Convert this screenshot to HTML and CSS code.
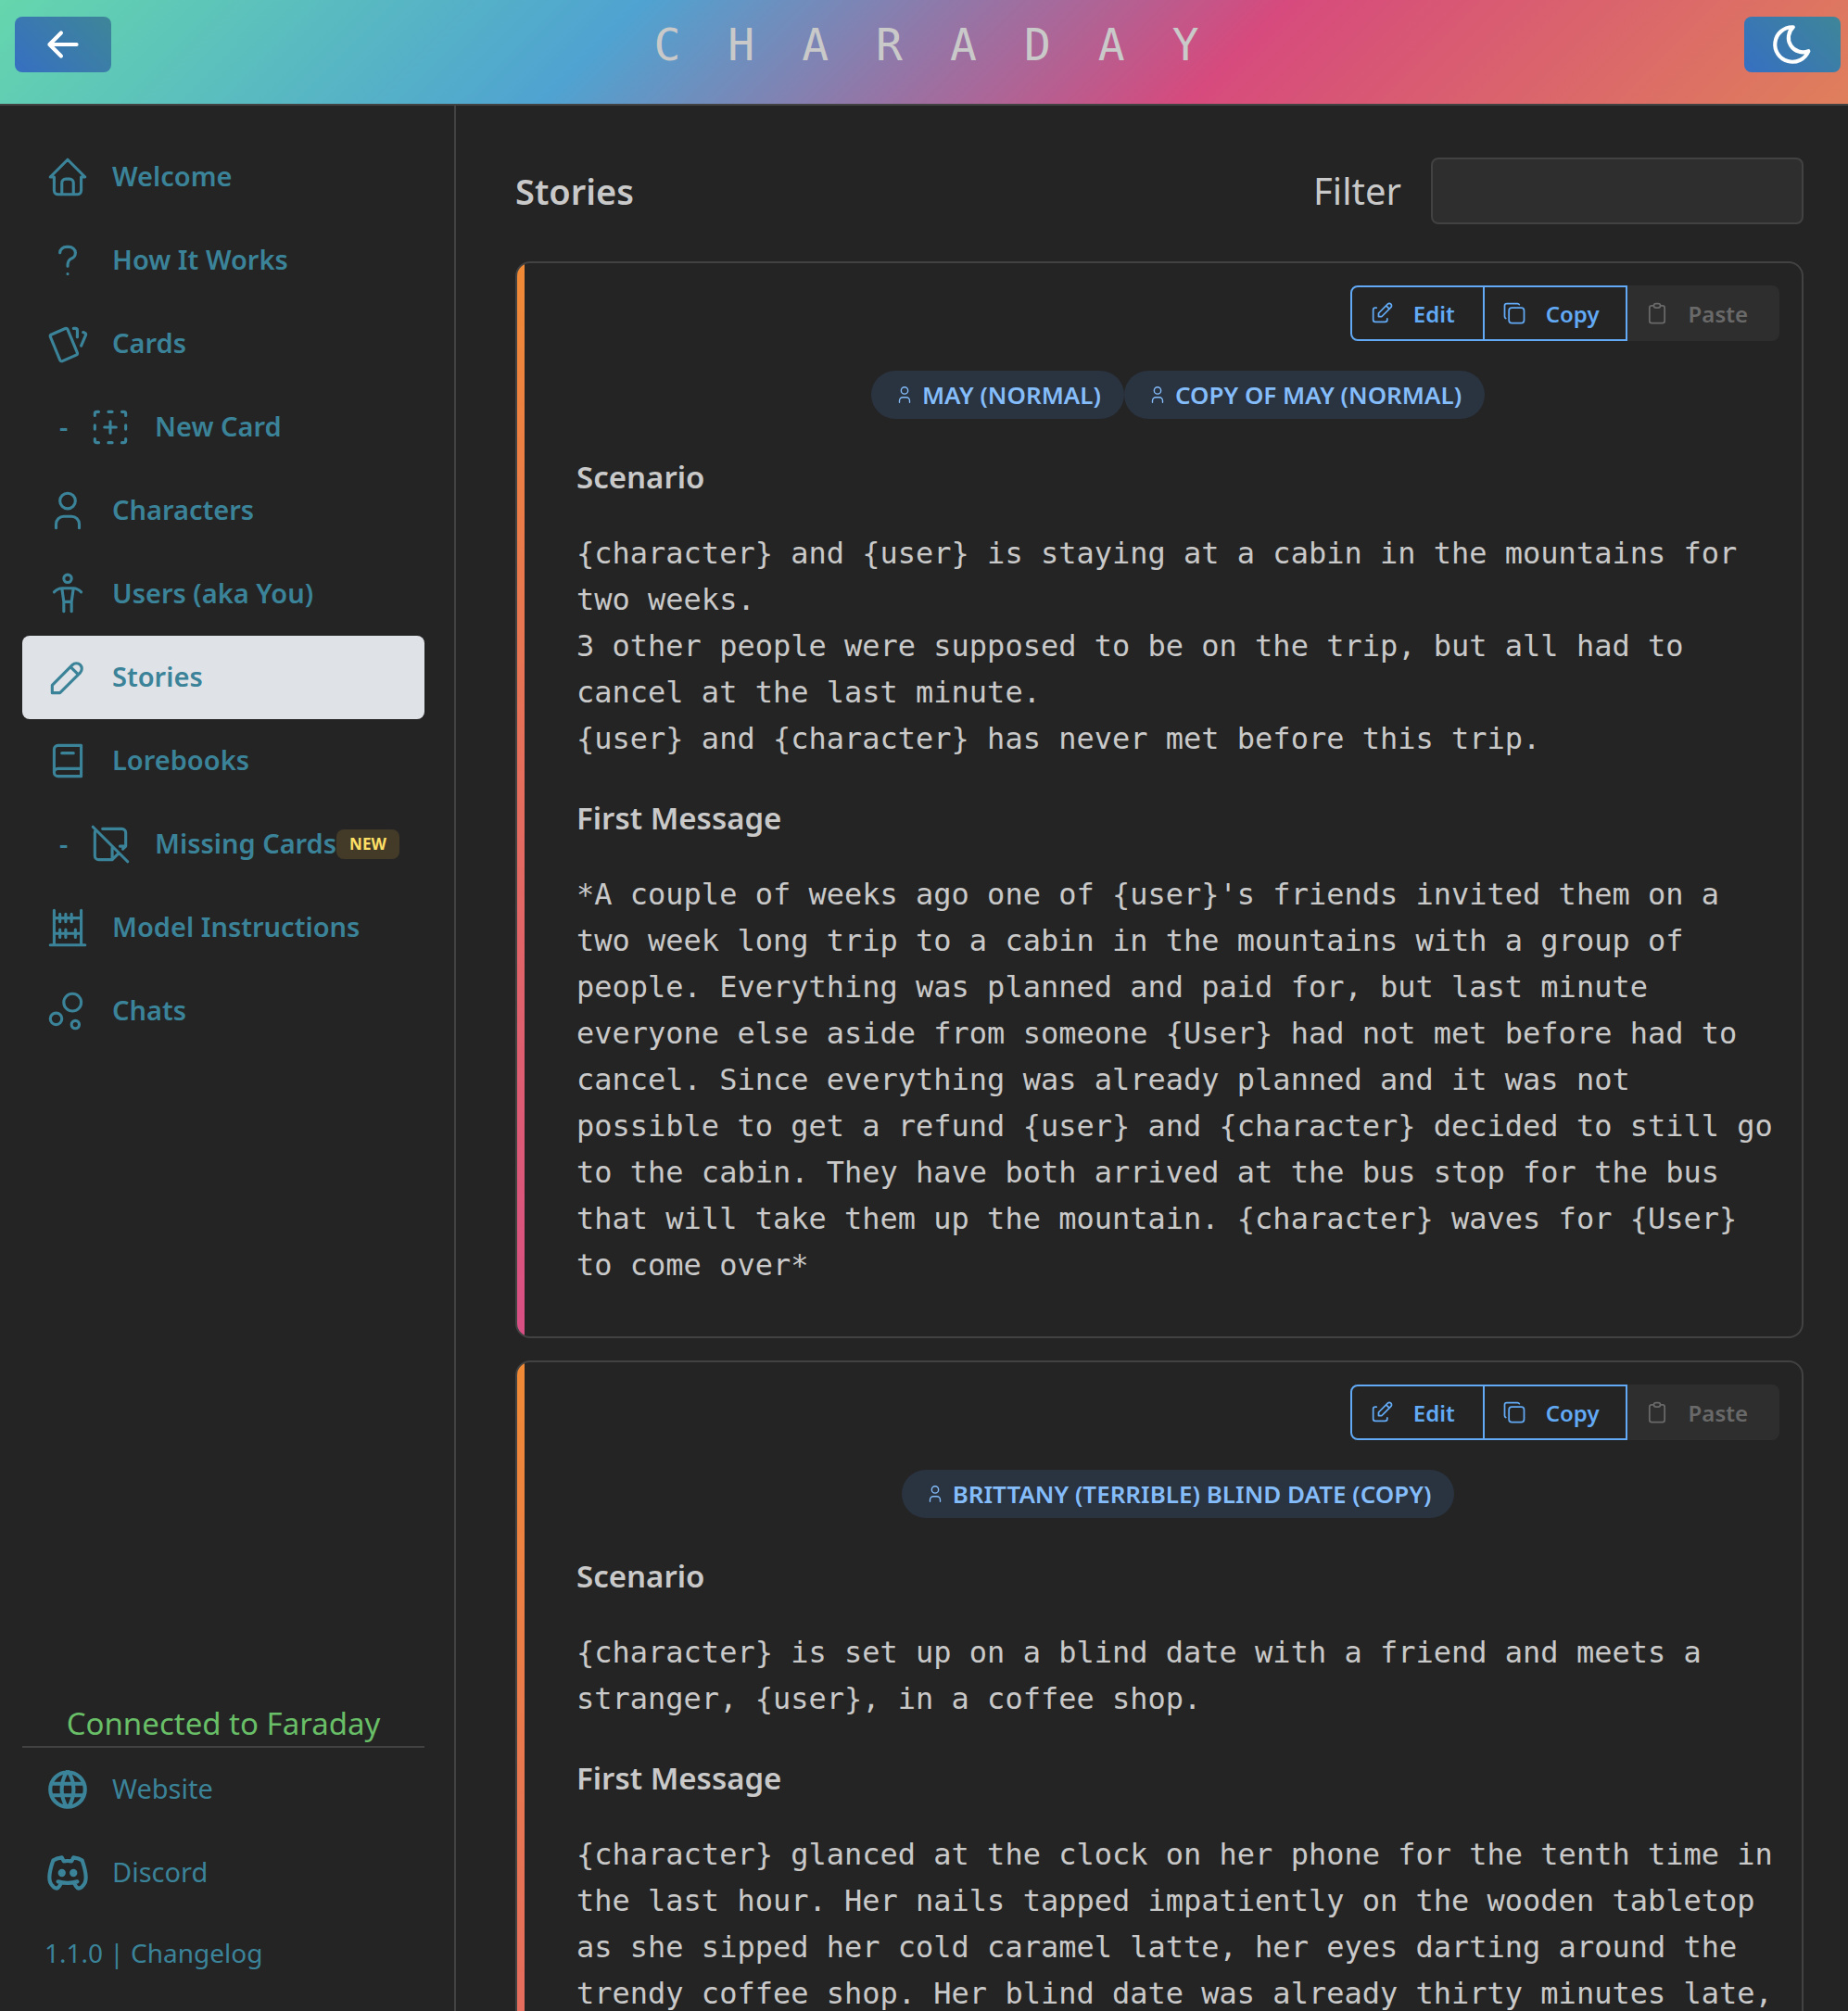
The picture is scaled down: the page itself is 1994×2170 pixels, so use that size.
FILE: index.html
```html
<!DOCTYPE html>
<html lang="en">
<head>
<meta charset="utf-8">
<meta name="viewport" content="width=device-width, initial-scale=1">
<title>Charaday</title>
<link rel="stylesheet" href="styles.css">
</head>
<body>
<svg class="sprite" aria-hidden="true">
  <symbol id="edit" viewBox="0 0 24 24"><path d="M7 7h-1a2 2 0 0 0-2 2v9a2 2 0 0 0 2 2h9a2 2 0 0 0 2-2v-1M20.385 6.585a2.1 2.1 0 0 0-2.97-2.97l-8.415 8.385v3h3l8.385-8.415zM16 5l3 3"/></symbol>
  <symbol id="copy" viewBox="0 0 24 24"><path d="M7 9.667a2.667 2.667 0 0 1 2.667-2.667h8.666a2.667 2.667 0 0 1 2.667 2.667v8.666a2.667 2.667 0 0 1-2.667 2.667h-8.666a2.667 2.667 0 0 1-2.667-2.667zM4.012 16.737a2.005 2.005 0 0 1-1.012-1.737v-10c0-1.1.9-2 2-2h10c.75 0 1.158.385 1.5 1"/></symbol>
  <symbol id="paste" viewBox="0 0 24 24"><path d="M9 5h-2a2 2 0 0 0-2 2v12a2 2 0 0 0 2 2h10a2 2 0 0 0 2-2v-12a2 2 0 0 0-2-2h-2M9 5a2 2 0 0 1 2-2h2a2 2 0 0 1 0 4h-2a2 2 0 0 1-2-2z"/></symbol>
  <symbol id="user" viewBox="0 0 24 24"><path d="M8 7a4 4 0 1 0 8 0a4 4 0 0 0-8 0M6 21v-2a4 4 0 0 1 4-4h4a4 4 0 0 1 4 4v2"/></symbol>
</svg>

<header class="topbar">
  <button class="icon-button" type="button" aria-label="Back"><svg class="icon icon-bold" viewBox="0 0 24 24"><path d="M5 12h14M5 12l6 6M5 12l6-6"/></svg></button>
  <div class="brand">CHARADAY</div>
  <button class="icon-button" type="button" aria-label="Toggle color scheme"><svg class="icon icon-bold" viewBox="0 0 24 24"><path d="M12 3c.132 0 .263 0 .393 0a7.5 7.5 0 0 0 7.92 12.446a9 9 0 1 1-8.313-12.454z"/></svg></button>
</header>

<div class="layout">
  <aside class="sidebar">
    <nav class="nav">
      <a class="nav-item" href="#welcome"><svg class="icon" viewBox="0 0 24 24"><path d="M5 12H3l9-9 9 9h-2M5 12v7a2 2 0 0 0 2 2h10a2 2 0 0 0 2-2v-7M9 21v-6a2 2 0 0 1 2-2h2a2 2 0 0 1 2 2v6"/></svg><span class="nav-label">Welcome</span></a>
      <a class="nav-item" href="#how"><svg class="icon" viewBox="0 0 24 24"><path d="M8 8a3.5 3 0 0 1 3.5-3h1a3.5 3 0 0 1 3.5 3a3 3 0 0 1-2 3a3 4 0 0 0-2 4M12 19v.01"/></svg><span class="nav-label">How It Works</span></a>
      <a class="nav-item" href="#cards"><svg class="icon" viewBox="0 0 24 24"><path d="M3.604 7.197l7.138-3.109a.96.96 0 0 1 1.27.527l4.924 11.902a1 1 0 0 1-.514 1.304l-7.137 3.109a.96.96 0 0 1-1.271-.527l-4.924-11.903a1 1 0 0 1 .514-1.304zM15 4h1a1 1 0 0 1 1 1v3.5M20 6c.264.112.52.217.768.315a1 1 0 0 1 .53 1.311l-2.298 5.374"/></svg><span class="nav-label">Cards</span></a>
      <a class="nav-item nav-sub" href="#new-card"><span class="dash">-</span><svg class="icon" viewBox="0 0 24 24"><path d="M9 12h6M12 9v6M4 6v-1a1 1 0 0 1 1-1h1M11 4h2M18 4h1a1 1 0 0 1 1 1v1M20 11v2M20 18v1a1 1 0 0 1-1 1h-1M13 20h-2M6 20h-1a1 1 0 0 1-1-1v-1M4 13v-2"/></svg><span class="nav-label">New Card</span></a>
      <a class="nav-item" href="#characters"><svg class="icon"><use href="#user"/></svg><span class="nav-label">Characters</span></a>
      <a class="nav-item" href="#users"><svg class="icon" viewBox="0 0 24 24"><path d="M10 16v5M14 16v5M9 9h6l-1 7h-4zM5 11c1.333-1.333 2.667-2 4-2M19 11c-1.333-1.333-2.667-2-4-2M10 4a2 2 0 1 0 4 0a2 2 0 1 0-4 0"/></svg><span class="nav-label">Users (aka You)</span></a>
      <a class="nav-item active" href="#stories" aria-current="page"><svg class="icon" viewBox="0 0 24 24"><path d="M4 20h4l10.5-10.5a2.828 2.828 0 1 0-4-4l-10.5 10.5v4M13.5 6.5l4 4"/></svg><span class="nav-label">Stories</span></a>
      <a class="nav-item" href="#lorebooks"><svg class="icon" viewBox="0 0 24 24"><path d="M19 4v16h-12a2 2 0 0 1-2-2v-12a2 2 0 0 1 2-2h12zM19 16h-12a2 2 0 0 0-2 2M9 8h6"/></svg><span class="nav-label">Lorebooks</span></a>
      <a class="nav-item nav-sub" href="#missing"><span class="dash">-</span><svg class="icon" viewBox="0 0 24 24"><path d="M13 20l3.505-3.505m2-2l1.501-1.501M17 13h3v-7a2 2 0 0 0-2-2h-10m-3.427.6c-.355.36-.573.853-.573 1.4v12a2 2 0 0 0 2 2h7v-6c0-.272.109-.519.285-.699M3 3l18 18"/></svg><span class="nav-label">Missing Cards</span><span class="badge">NEW</span></a>
      <a class="nav-item" href="#models"><svg class="icon" viewBox="0 0 24 24"><path d="M5 3v18M19 21v-18M5 7h14M5 15h14M8 13v4M11 13v4M16 13v4M14 5v4M11 5v4M8 5v4M3 21h18"/></svg><span class="nav-label">Model Instructions</span></a>
      <a class="nav-item" href="#chats"><svg class="icon" viewBox="0 0 24 24"><path d="M3 16a3 3 0 1 0 6 0a3 3 0 1 0-6 0M14 19a2 2 0 1 0 4 0a2 2 0 1 0-4 0M10 7.5a4.5 4.5 0 1 0 9 0a4.5 4.5 0 1 0-9 0"/></svg><span class="nav-label">Chats</span></a>
    </nav>
    <div class="sidebar-foot">
      <p class="status">Connected to Faraday</p>
      <a class="nav-item light" href="#website"><svg class="icon icon-bold" viewBox="0 0 24 24"><path d="M3 12a9 9 0 1 0 18 0a9 9 0 0 0-18 0M3.6 9h16.8M3.6 15h16.8M11.5 3a17 17 0 0 0 0 18M12.5 3a17 17 0 0 1 0 18"/></svg><span class="nav-label">Website</span></a>
      <a class="nav-item light" href="#discord"><svg class="icon icon-bold" viewBox="0 0 24 24"><path d="M8 12a1 1 0 1 0 2 0a1 1 0 0 0-2 0M14 12a1 1 0 1 0 2 0a1 1 0 0 0-2 0M15.5 17c0 1 1.5 3 2 3c1.5 0 2.833-1.667 3.5-3c.667-1.667.5-5.833-1.5-11.5c-1.457-1.015-3-1.34-4.5-1.5l-.972 1.923a11.913 11.913 0 0 0-4.053 0l-.975-1.923c-1.5.16-3.043.485-4.5 1.5c-2 5.667-2.167 9.833-1.5 11.5c.667 1.333 2 3 3.5 3c.5 0 2-2 2-3M7 16.5c3.5 1 6.5 1 10 0"/></svg><span class="nav-label">Discord</span></a>
      <a class="changelog" href="#changelog">1.1.0 | Changelog</a>
    </div>
  </aside>

  <main class="main">
    <div class="page-head">
      <h1 class="page-title">Stories</h1>
      <label class="filter-label" for="filter">Filter</label>
      <input class="filter-input" id="filter" type="text">
    </div>

    <article class="story">
      <div class="toolbar">
        <button class="tool" type="button"><svg class="icon"><use href="#edit"/></svg>Edit</button>
        <button class="tool" type="button"><svg class="icon"><use href="#copy"/></svg>Copy</button>
        <button class="tool" type="button" disabled><svg class="icon"><use href="#paste"/></svg>Paste</button>
      </div>
      <div class="chips">
        <span class="chip"><svg class="icon"><use href="#user"/></svg>MAY (NORMAL)</span>
        <span class="chip"><svg class="icon"><use href="#user"/></svg>COPY OF MAY (NORMAL)</span>
      </div>
      <h2 class="section-title">Scenario</h2>
      <p class="story-text">{character} and {user} is staying at a cabin in the mountains for two weeks.<br>3 other people were supposed to be on the trip, but all had to cancel at the last minute.<br>{user} and {character} has never met before this trip.</p>
      <h2 class="section-title">First Message</h2>
      <p class="story-text">*A couple of weeks ago one of {user}'s friends invited them on a two week long trip to a cabin in the mountains with a group of people. Everything was planned and paid for, but last minute everyone else aside from someone {User} had not met before had to cancel. Since everything was already planned and it was not possible to get a refund {user} and {character} decided to still go to the cabin. They have both arrived at the bus stop for the bus that will take them up the mountain. {character} waves for {User} to come over*</p>
    </article>

    <article class="story story-long">
      <div class="toolbar">
        <button class="tool" type="button"><svg class="icon"><use href="#edit"/></svg>Edit</button>
        <button class="tool" type="button"><svg class="icon"><use href="#copy"/></svg>Copy</button>
        <button class="tool" type="button" disabled><svg class="icon"><use href="#paste"/></svg>Paste</button>
      </div>
      <div class="chips">
        <span class="chip"><svg class="icon"><use href="#user"/></svg>BRITTANY (TERRIBLE) BLIND DATE (COPY)</span>
      </div>
      <h2 class="section-title">Scenario</h2>
      <p class="story-text">{character} is set up on a blind date with a friend and meets a stranger, {user}, in a coffee shop.</p>
      <h2 class="section-title">First Message</h2>
      <p class="story-text">{character} glanced at the clock on her phone for the tenth time in the last hour. Her nails tapped impatiently on the wooden tabletop as she sipped her cold caramel latte, her eyes darting around the trendy coffee shop. Her blind date was already thirty minutes late,</p>
    </article>
  </main>
</div>
</body>
</html>
```
FILE: styles.css
```css
:root {
  --bg: #242424;
  --surface: #2e2e2e;
  --line: #424242;
  --text: #c9c9c9;
  --accent: #3b8399;
  --blue: #62aaf5;
}

* { box-sizing: border-box; }

body {
  margin: 0;
  height: 100vh;
  display: flex;
  flex-direction: column;
  overflow: hidden;
  background: var(--bg);
  color: var(--text);
  font-family: "Noto Sans", "Open Sans", sans-serif;
}

h1, h2, p { margin: 0; }
a { color: inherit; text-decoration: none; }
button { font: inherit; cursor: pointer; }

.sprite { display: none; }

.icon {
  flex: none;
  width: 50px;
  height: 50px;
  fill: none;
  stroke: currentColor;
  stroke-width: 1.5;
  stroke-linecap: round;
  stroke-linejoin: round;
}
.icon-bold { stroke-width: 2; }

/* Top bar */
.topbar {
  flex: none;
  display: flex;
  align-items: center;
  justify-content: space-between;
  padding: 18px 8px 34px 16px;
  border-bottom: 2px solid var(--line);
  background: linear-gradient(135deg, #65d6ad 0%, #4fa3d1 33%, #d64a7d 66%, #df7f5b 100%);
}
.icon-button {
  display: flex;
  align-items: center;
  justify-content: center;
  width: 104px;
  height: 60px;
  padding: 0;
  border: 0;
  border-radius: 8px;
  color: #fff;
  background: linear-gradient(45deg, #366fc2, #3e8698);
}
.brand {
  padding-left: 48px;
  font: 48px/60px "DejaVu Sans Mono", monospace;
  letter-spacing: 51px;
}

.layout {
  flex: 1;
  min-height: 0;
  display: flex;
}

/* Sidebar */
.sidebar {
  flex: none;
  width: 492px;
  display: flex;
  flex-direction: column;
  justify-content: space-between;
  padding: 32px 32px 22px 24px;
  border-right: 2px solid var(--line);
  color: var(--accent);
}
.nav-item {
  display: flex;
  align-items: center;
  height: 90px;
  padding: 0 24px;
  border-radius: 8px;
  font-size: 29px;
  font-weight: 600;
  white-space: nowrap;
}
.nav-item .icon { margin-right: 23px; }
.nav-label { padding-bottom: 3px; }
.nav-sub { padding: 0 0 0 40px; }
.dash { width: 30px; padding-bottom: 3px; }
.active { background: #dfe2e6; }
.light { font-weight: 400; }
.badge {
  padding: 0 14px;
  border-radius: 8px;
  background: #443a28;
  color: #ffe066;
  font-size: 17px;
  font-weight: 700;
  line-height: 32px;
}
.status {
  border-bottom: 2px solid var(--line);
  color: #69bf67;
  font-size: 33px;
  line-height: 48px;
  text-align: center;
  white-space: nowrap;
}
.changelog {
  display: block;
  padding: 0 24px;
  font-size: 28px;
  line-height: 82px;
}

/* Main column */
.main {
  flex: 1;
  min-width: 0;
  overflow: auto;
  scrollbar-width: none;
  padding: 56px 48px 24px 64px;
}
.page-head {
  display: flex;
  align-items: center;
  margin-bottom: 40px;
}
.page-title {
  flex: 1;
  font-size: 38px;
  font-weight: 600;
  line-height: 50px;
}
.filter-label {
  margin-right: 32px;
  font-size: 40px;
  line-height: 50px;
}
.filter-input {
  width: 402px;
  height: 72px;
  padding: 0 24px;
  border: 2px solid var(--line);
  border-radius: 8px;
  background: var(--surface);
  color: var(--text);
  font: inherit;
  font-size: 29px;
}

.story {
  margin-bottom: 24px;
  padding: 24px 24px 52px 64px;
  border: 2px solid var(--line);
  border-radius: 16px;
  background: linear-gradient(#f08a36, #d84f85) no-repeat left / 8px 100%;
}
.story-long { min-height: 1400px; }

.toolbar {
  display: flex;
  justify-content: flex-end;
}
.tool {
  display: flex;
  align-items: center;
  gap: 20px;
  height: 60px;
  padding: 0 28px 0 18px;
  border: 2px solid var(--blue);
  border-left-width: 0;
  background: none;
  color: var(--blue);
  font-size: 24px;
  font-weight: 600;
}
.tool .icon { width: 28px; height: 28px; }
.tool:first-child { padding-right: 30px; border-left-width: 2px; border-radius: 8px 0 0 8px; }
.tool:last-child { padding-right: 32px; border-radius: 0 8px 8px 0; }
.tool:disabled {
  border-color: var(--surface);
  background: var(--surface);
  color: #696969;
  cursor: default;
}

.chips {
  display: flex;
  justify-content: center;
  margin: 32px 0 38px;
}
.chip {
  display: flex;
  align-items: center;
  gap: 8px;
  padding: 0 25px;
  border-radius: 26px;
  background: #2a3340;
  color: #84bdfa;
  font-size: 26px;
  font-weight: 600;
  line-height: 52px;
  white-space: nowrap;
}
.chip .icon { width: 22px; height: 22px; }

.section-title {
  font-size: 33px;
  font-weight: 600;
  line-height: 50px;
}
.story-text {
  margin: 32px 0 36px;
  font: 32px/50px "DejaVu Sans Mono", monospace;
}
.story-text:last-child { margin-bottom: 0; }
```
